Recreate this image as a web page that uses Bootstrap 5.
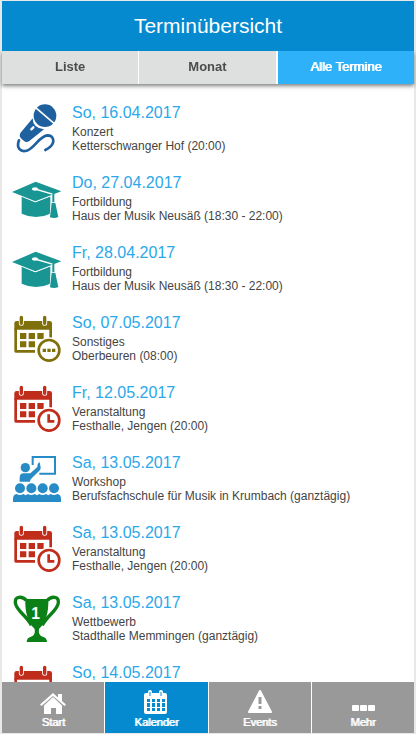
<!DOCTYPE html>
<html lang="de">
<head>
<meta charset="utf-8">
<meta name="viewport" content="width=device-width, initial-scale=1">
<title>Terminübersicht</title>
<link href="https://cdn.jsdelivr.net/npm/bootstrap@5.3.0/dist/css/bootstrap.min.css" rel="stylesheet">
<style>
  body { font-family: "Liberation Sans", Arial, sans-serif; background: #e8e8e8; padding: 1px 2px; }
  header { position: relative; z-index: 2; }
  .app-title { background: #058acf; font-size: 21px; line-height: 50px; }
  .tabs { position: relative; z-index: 1; gap: 1px; box-shadow: 0 2px 4px rgba(0,0,0,.5); background: #fff; }
  .tabs .btn { background: #dedfdf; color: #4c4c4c; font-size: 13px; line-height: 31px; padding: 0 0 2px; }
  .tabs .btn.active { background: #2eb1f8; color: #fff; font-weight: 400; text-shadow: 1px 0 #fff; border-left: 1px solid #fff; }
  .events { overflow-y: auto; scrollbar-width: none; padding-top: 10px; min-height: 0; }
  .events::-webkit-scrollbar { display: none; }
  .event { padding: 10px; gap: 10px; color: #444; font-size: 12px; line-height: 14px; }
  .event h2 { color: #2ba8ea; font-size: 16px; line-height: 18px; margin-bottom: 3px; }
  .event svg { width: 50px; height: 50px; flex: none; }
  .event .info { height: 50px; }
  .bottom { gap: 1px; background: #fff; }
  .bottom a { background: #999; color: #fff; font-size: 11px; line-height: 14px; text-shadow: 1px 0 #fff; padding: 7px 0 4px; }
  .bottom a.active { background: #058acf; }
  .bottom svg { width: 26px; height: 26px; }
  .blue { color: #1f609f } .teal { color: #199694 } .olive { color: #80700b }
  .red { color: #c02d1b } .sky { color: #278bc5 } .green { color: #0b8016 }
</style>
<script src="https://cdn.jsdelivr.net/npm/bootstrap@5.3.0/dist/js/bootstrap.bundle.min.js"></script>
</head>
<body class="d-flex flex-column vh-100">
<svg class="d-none" aria-hidden="true">
  <symbol id="mic" viewBox="36 27 150 150">
    <circle cx="135" cy="62" r="34" fill="currentColor"/>
    <path d="M106 37L163 86" stroke="#fff" stroke-width="5"/>
    <path d="M98 70Q98 99 132 103L89 137Q80 145 72 138L62 129Q57 122 61 114Z" fill="currentColor"/>
    <path d="M94 103l6-6" stroke="#fff" stroke-width="7" stroke-linecap="round"/>
    <path d="M57 136C48 160 62 172 80 167C104 160 118 122 143 121C160 121 166 140 152 154Q146 160 136 165" fill="none" stroke="currentColor" stroke-width="8" stroke-linecap="round"/>
  </symbol>
  <symbol id="cap" viewBox="36 12 150 150">
    <path d="M65 79L106 97L151 79V131Q108 151 65 131Z" fill="currentColor"/>
    <path d="M36 66L107 35L184 64L106 94Z" fill="currentColor" stroke="#fff" stroke-width="5" paint-order="stroke"/>
    <path d="M105 57L160 73" stroke="#fff" stroke-width="4"/>
    <ellipse cx="105" cy="57" rx="9" ry="5" fill="#fff"/>
    <path d="M160 74V105" stroke="#fff" stroke-width="12"/>
    <path d="M160 70V105" stroke="currentColor" stroke-width="6"/>
    <path d="M155 99h11l9 42q-12 6-25 1Z" fill="currentColor" stroke="#fff" stroke-width="4" paint-order="stroke"/>
  </symbol>
  <symbol id="cal-base" viewBox="36 27 150 150">
    <path d="M43 74V55Q43 48 50 48H149Q156 48 156 55V74Z" fill="currentColor"/>
    <path d="M47 70V139H105M152 70V98" fill="none" stroke="currentColor" stroke-width="8" stroke-linejoin="round"/>
    <path d="M64 36V55M134 36V55" stroke="#fff" stroke-width="15" stroke-linecap="round"/>
    <path d="M64 37V55M134 37V55" stroke="currentColor" stroke-width="10" stroke-linecap="round"/>
    <path d="M60 84h19v18H60zM86 84h19v18H86zM112 84h19v18H112zM60 109h19v18H60zM86 109h19v18H86z" fill="currentColor"/>
    <circle cx="147" cy="136" r="39" fill="#fff"/>
    <circle cx="147" cy="136" r="31" fill="#fff" stroke="currentColor" stroke-width="8"/>
  </symbol>
  <symbol id="misc" viewBox="36 27 150 150">
    <use href="#cal-base" x="36" y="27" width="150" height="150"/>
    <path d="M128 131h10v10h-10zM142 131h10v10h-10zM156 131h10v10h-10z" fill="currentColor"/>
  </symbol>
  <symbol id="clock" viewBox="36 27 150 150">
    <use href="#cal-base" x="36" y="27" width="150" height="150"/>
    <path d="M146 118V139H163" fill="none" stroke="currentColor" stroke-width="8"/>
  </symbol>
  <symbol id="class" viewBox="36 27 150 150">
    <path d="M98 60V36H165V86H118" fill="none" stroke="currentColor" stroke-width="6"/>
    <circle cx="76" cy="68" r="14" fill="currentColor"/>
    <path d="M59 110V98Q59 85 71 85H91L112 66Q112 54 119 52L122 67Q123 72 118 77L95 100Q90 104 90 110Z" fill="currentColor"/>
    <g fill="currentColor">
      <circle cx="60" cy="130" r="15"/><circle cx="94" cy="130" r="15"/><circle cx="128" cy="130" r="15"/><circle cx="162" cy="130" r="15"/>
      <path d="M39 171V162Q39 149 50 147Q60 153 70 147L77 151L84 147Q94 153 104 147L111 151L118 147Q128 153 138 147L145 151L152 147Q162 153 172 147Q183 149 183 162V171Z"/>
    </g>
  </symbol>
  <symbol id="cup" viewBox="36 27 150 150">
    <path d="M76 42H145Q147 104 117 132Q114 151 128 155Q141 158 141 171H80Q80 158 93 155Q107 151 104 132Q74 104 76 42Z" fill="currentColor"/>
    <path d="M79 46C66 32 44 34 46 53C47 76 80 91 94 121M142 46C155 32 177 34 175 53C174 76 141 91 127 121" fill="none" stroke="currentColor" stroke-width="10"/>
    <text x="107" y="102" text-anchor="middle" font-size="47" font-weight="700" fill="#fff">1</text>
  </symbol>
</svg>

<header class="flex-shrink-0">
  <h1 class="app-title text-white text-center fw-normal m-0">Terminübersicht</h1>
</header>
<nav class="tabs d-flex flex-shrink-0" aria-label="Ansicht">
  <button type="button" class="btn border-0 rounded-0 col fw-bold">Liste</button>
  <button type="button" class="btn border-0 rounded-0 col fw-bold">Monat</button>
  <button type="button" class="btn border-top-0 border-end-0 border-bottom-0 rounded-0 col active">Alle Termine</button>
</nav>
<main class="events flex-grow-1 bg-white">
  <ul class="list-unstyled m-0">
    <li class="event d-flex"><svg class="blue"><use href="#mic"/></svg><div class="info"><h2 class="fw-normal">So, 16.04.2017</h2><div>Konzert</div><div>Ketterschwanger Hof (20:00)</div></div></li>
    <li class="event d-flex"><svg class="teal"><use href="#cap"/></svg><div class="info"><h2 class="fw-normal">Do, 27.04.2017</h2><div>Fortbildung</div><div>Haus der Musik Neusäß (18:30 - 22:00)</div></div></li>
    <li class="event d-flex"><svg class="teal"><use href="#cap"/></svg><div class="info"><h2 class="fw-normal">Fr, 28.04.2017</h2><div>Fortbildung</div><div>Haus der Musik Neusäß (18:30 - 22:00)</div></div></li>
    <li class="event d-flex"><svg class="olive"><use href="#misc"/></svg><div class="info"><h2 class="fw-normal">So, 07.05.2017</h2><div>Sonstiges</div><div>Oberbeuren (08:00)</div></div></li>
    <li class="event d-flex"><svg class="red"><use href="#clock"/></svg><div class="info"><h2 class="fw-normal">Fr, 12.05.2017</h2><div>Veranstaltung</div><div>Festhalle, Jengen (20:00)</div></div></li>
    <li class="event d-flex"><svg class="sky"><use href="#class"/></svg><div class="info"><h2 class="fw-normal">Sa, 13.05.2017</h2><div>Workshop</div><div>Berufsfachschule für Musik in Krumbach (ganztägig)</div></div></li>
    <li class="event d-flex"><svg class="red"><use href="#clock"/></svg><div class="info"><h2 class="fw-normal">Sa, 13.05.2017</h2><div>Veranstaltung</div><div>Festhalle, Jengen (20:00)</div></div></li>
    <li class="event d-flex"><svg class="green"><use href="#cup"/></svg><div class="info"><h2 class="fw-normal">Sa, 13.05.2017</h2><div>Wettbewerb</div><div>Stadthalle Memmingen (ganztägig)</div></div></li>
    <li class="event d-flex"><svg class="red"><use href="#clock"/></svg><div class="info"><h2 class="fw-normal">So, 14.05.2017</h2></div></li>
  </ul>
</main>
<nav class="bottom d-flex flex-shrink-0" aria-label="Hauptmenü">
  <a href="#start" class="col d-flex flex-column align-items-center text-decoration-none"><svg viewBox="0 0 26 26" fill="#fff"><path d="M0 15.500L13 4l5 4.500V5h4v7l4 3.500-1.500 1.500L13 7 1.500 17z"/><path d="M4 16.500L13 8l9 8.500V25h-6v-6h-5v6H4z"/></svg>Start</a>
  <a href="#kalender" class="active col d-flex flex-column align-items-center text-decoration-none"><svg viewBox="0 0 26 26" fill="#fff"><path fill-rule="evenodd" d="M3 4h2V3q0-2 2-2t2 2v1h7V3q0-2 2-2t2 2v1h2q2 0 2 2v17q0 2-2 2H3q-2 0-2-2V6q0-2 2-2zM4 10v3h3v-3zm5 0v3h3v-3zm5 0v3h3v-3zm5 0v3h3v-3zM4 14v4h3v-4zm5 0v4h3v-4zm5 0v4h3v-4zm5 0v4h3v-4zM4 19v3h3v-3zm5 0v3h3v-3zm5 0v3h3v-3zm5 0v3h3v-3z"/><path d="M7 3v4M18 3v4" stroke="#058acf"/></svg>Kalender</a>
  <a href="#events" class="col d-flex flex-column align-items-center text-decoration-none"><svg viewBox="0 0 26 26"><path d="M13 2L24 23H2z" fill="#fff" stroke="#fff" stroke-width="2" stroke-linejoin="round"/><path d="M13 8v7M13 17v3" stroke="#999" stroke-width="3"/></svg>Events</a>
  <a href="#mehr" class="col d-flex flex-column align-items-center text-decoration-none"><svg viewBox="0 0 26 26" fill="#fff"><rect x="2" y="16" width="7" height="6" rx="1"/><rect x="10" y="16" width="7" height="6" rx="1"/><rect x="18" y="16" width="7" height="6" rx="1"/></svg>Mehr</a>
</nav>
</body>
</html>
